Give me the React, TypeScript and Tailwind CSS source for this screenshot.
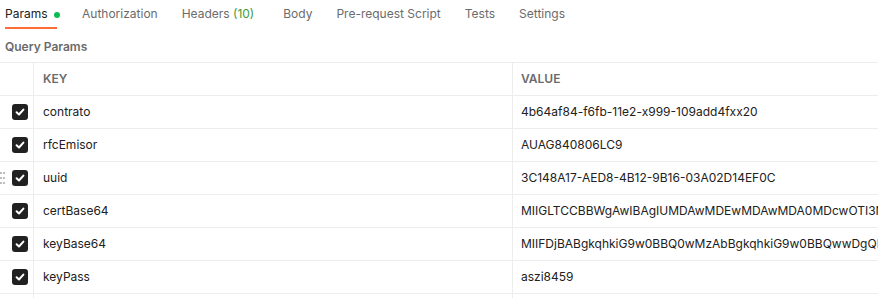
import React from "react";

const rows = [
  { k: "contrato", v: "4b64af84-f6fb-11e2-x999-109add4fxx20" },
  { k: "rfcEmisor", v: "AUAG840806LC9" },
  { k: "uuid", v: "3C148A17-AED8-4B12-9B16-03A02D14EF0C", drag: true },
  { k: "certBase64", v: "MIIGLTCCBBWgAwIBAgIUMDAwMDEwMDAwMDA0MDcwOTI3NzYwDQYJKoZIhvcNAQELBQAwggGyMTgwNgYDVQQDDC9B" },
  { k: "keyBase64", v: "MIIFDjBABgkqhkiG9w0BBQ0wMzAbBgkqhkiG9w0BBQwwDgQIAgEAAoIBAQACAggAMBQGCCqGSIb3DQMHBAgwggS9" },
  { k: "keyPass", v: "aszi8459" },
];

function Check() {
  return (
    <div className="w-4 h-4 rounded-[3px] bg-[#212121] flex items-center justify-center">
      <svg width="12" height="12" viewBox="0 0 12 12" fill="none">
        <path d="M2.6 6.2 L5 8.5 L9.4 3.6" stroke="#fff" strokeWidth="2" strokeLinecap="round" strokeLinejoin="round" />
      </svg>
    </div>
  );
}

export default function App() {
  return (
    <div className="w-[878px] h-[298px] overflow-hidden bg-white text-[12px] font-['Inter',sans-serif] text-[#212121]">
      <div className="flex pl-[5px] h-[29px] leading-4 text-[#6b6b6b]">
        <div className="w-[52px] shrink-0 pt-[6px] pb-[5px] border-b-2 border-[#ff6c37] flex items-start gap-[6px] overflow-visible">
          <span className="text-[#212121] shrink-0">Params</span>
          <span className="w-[6px] h-[6px] shrink-0 rounded-full bg-[#0cbb52] mt-[6px]" />
        </div>
        <div className="ml-[25px] pt-[6px]">Authorization</div>
        <div className="ml-6 pt-[6px]">
          Headers<span className="text-[#3f9a3a]"> (10)</span>
        </div>
        <div className="ml-[29px] pt-[6px]">Body</div>
        <div className="ml-6 pt-[6px]">Pre-request Script</div>
        <div className="ml-6 pt-[6px]">Tests</div>
        <div className="ml-6 pt-[6px]">Settings</div>
      </div>
      <div className="pl-[5px] pt-[10px] pb-[7px] leading-4 font-semibold text-[#6b6b6b]">Query Params</div>
      <div className="w-[1200px] border-t border-[#ededed]">
        <div className="flex h-[33px] border-b border-[#ededed] font-semibold text-[#6b6b6b]">
          <div className="w-[34px] border-r border-[#ededed]" />
          <div className="w-[479px] border-r border-[#ededed] pl-[9px] flex items-center">KEY</div>
          <div className="flex-1 pl-[8px] flex items-center">VALUE</div>
        </div>
        {rows.map((r) => (
          <div key={r.k} className="relative flex h-[33px] border-b border-[#ededed]">
            {r.drag && (
              <div className="absolute left-0 top-[10px] grid grid-cols-2 gap-x-[1px] gap-y-[3px]">
                {Array.from({ length: 6 }).map((_, i) => (
                  <span key={i} className="w-[2px] h-[2px] rounded-full bg-[#a6a6a6]" />
                ))}
              </div>
            )}
            <div className="w-[34px] border-r border-[#ededed] pl-[12px] flex items-center">
              <Check />
            </div>
            <div className="w-[479px] border-r border-[#ededed] pl-[9px] flex items-center">{r.k}</div>
            <div className="flex-1 pl-[8px] flex items-center whitespace-nowrap overflow-hidden">{r.v}</div>
          </div>
        ))}
        <div className="flex h-[33px]">
          <div className="w-[34px] border-r border-[#ededed]" />
          <div className="w-[479px] border-r border-[#ededed]" />
          <div className="flex-1" />
        </div>
      </div>
    </div>
  );
}
